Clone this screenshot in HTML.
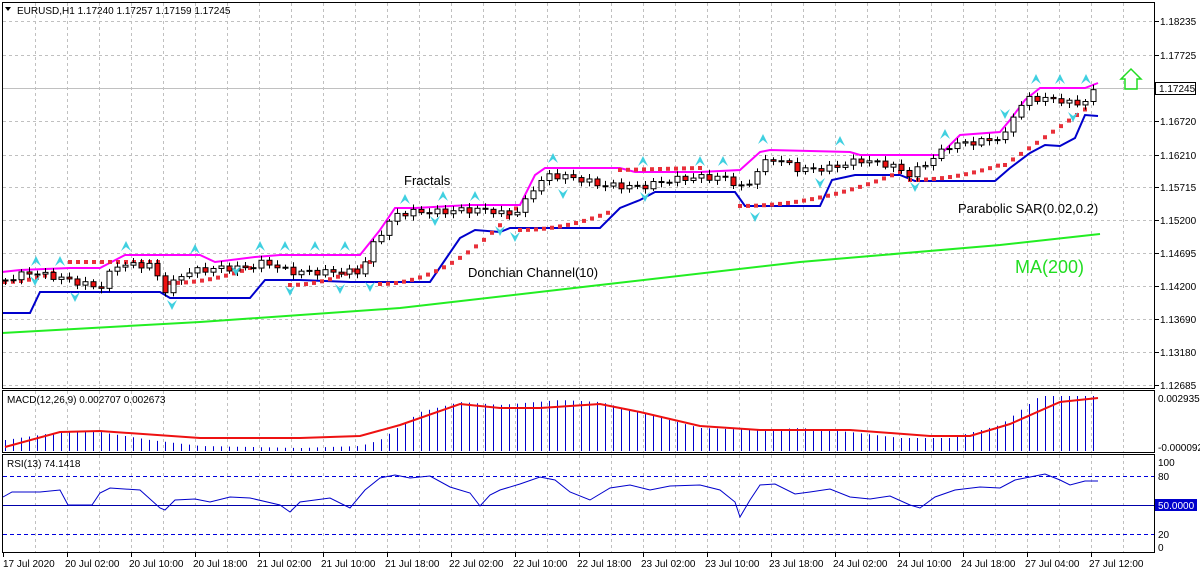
<!DOCTYPE html>
<html><head><meta charset="utf-8"><style>
html,body{margin:0;padding:0;background:#fff;width:1200px;height:575px;overflow:hidden}
svg{display:block;font-family:"Liberation Sans",sans-serif}
</style></head><body>
<svg id="s" width="1200" height="575" xmlns="http://www.w3.org/2000/svg">
<rect width="1200" height="575" fill="#fff"/>
<g id="grid"></g>
<g id="plot"></g>
<g id="frame" fill="none" stroke="#000" stroke-width="1">
<rect x="2.5" y="2.5" width="1152" height="386"/>
<rect x="2.5" y="390.5" width="1152" height="62"/>
<rect x="2.5" y="454.5" width="1152" height="98"/>
</g>
<g font-size="11" fill="#000">
<text x="17" y="14" font-size="10">EURUSD,H1  1.17240 1.17257 1.17159 1.17245</text>
<path d="M5 7 L11 7 L8 11 Z" fill="#000"/>
<text x="7" y="403" font-size="10">MACD(12,26,9) 0.002707 0.002673</text>
<text x="7" y="467" font-size="10">RSI(13) 74.1418</text>
<text x="404" y="185" font-size="13">Fractals</text>
<text x="468" y="277" font-size="13">Donchian Channel(10)</text>
<text x="958" y="213" font-size="13">Parabolic SAR(0.02,0.2)</text>
<text x="1015" y="273" font-size="18" fill="#22dd22">MA(200)</text>
</g>
<path d="M1125 89 L1125 79 L1121 79 L1131 69 L1141 79 L1137 79 L1137 89 Z" fill="none" stroke="#22dd22" stroke-width="1.5"/>
<g id="axis" font-size="10" fill="#000"></g>
</svg>
<script>
var NS="http://www.w3.org/2000/svg";
function el(p,t,a,txt){var e=document.createElementNS(NS,t);for(var k in a)e.setAttribute(k,a[k]);if(txt!=null)e.textContent=txt;p.appendChild(e);return e;}
function interp(pts,x){if(x<=pts[0][0])return pts[0][1];for(var i=1;i<pts.length;i++){if(x<=pts[i][0]){var a=pts[i-1],b=pts[i];return a[1]+(b[1]-a[1])*(x-a[0])/(b[0]-a[0]);}}return pts[pts.length-1][1];}
function poly(pts){return pts.map(function(p){return p[0]+","+p[1]}).join(" ");}
var G=document.getElementById("grid"),P=document.getElementById("plot"),A=document.getElementById("axis");
for(var x=35;x<1155;x+=32){[[3,388],[391,452],[455,552]].forEach(function(r){el(G,"line",{x1:x+.5,y1:r[0],x2:x+.5,y2:r[1],stroke:"#c0c0c0","stroke-dasharray":"3,3"});});}
var prices=[["1.18235",21],["1.17725",55],["1.16720",121],["1.16210",155],["1.15715",187],["1.15200",220],["1.14695",253],["1.14200",286],["1.13690",319],["1.13180",352],["1.12685",385]];
prices.forEach(function(p){el(G,"line",{x1:3,y1:p[1]+.5,x2:1154,y2:p[1]+.5,stroke:"#c0c0c0","stroke-dasharray":"3,3"});el(A,"line",{x1:1155,y1:p[1]+.5,x2:1159,y2:p[1]+.5,stroke:"#000"});el(A,"text",{x:1160,y:p[1]+4},p[0]);});
el(G,"line",{x1:3,y1:88.5,x2:1154,y2:88.5,stroke:"#c0c0c0"});
el(A,"rect",{x:1155.5,y:82.5,width:40,height:12,fill:"#fff",stroke:"#000"});
el(A,"text",{x:1159,y:92},"1.17245");
el(G,"line",{x1:3,y1:476.5,x2:1154,y2:476.5,stroke:"#0000dd","stroke-dasharray":"4,3"});
el(G,"line",{x1:3,y1:534.5,x2:1154,y2:534.5,stroke:"#0000dd","stroke-dasharray":"4,3"});
el(G,"line",{x1:3,y1:505.5,x2:1154,y2:505.5,stroke:"#0000aa"});
[["100",466],["80",480],["20",538],["0",551]].forEach(function(t){el(A,"text",{x:1158,y:t[1]},t[0]);});
el(A,"rect",{x:1155,y:499,width:42,height:12,fill:"#0000cc"});
el(A,"text",{x:1158,y:509,fill:"#fff"},"50.0000");
el(A,"text",{x:1158,y:402},"0.002935");
el(A,"text",{x:1158,y:451},"-0.000092");
var tl=["17 Jul 2020","20 Jul 02:00","20 Jul 10:00","20 Jul 18:00","21 Jul 02:00","21 Jul 10:00","21 Jul 18:00","22 Jul 02:00","22 Jul 10:00","22 Jul 18:00","23 Jul 02:00","23 Jul 10:00","23 Jul 18:00","24 Jul 02:00","24 Jul 10:00","24 Jul 18:00","27 Jul 04:00","27 Jul 12:00"];
tl.forEach(function(t,i){var x=3+64*i;el(A,"line",{x1:x+.5,y1:553,x2:x+.5,y2:557,stroke:"#000"});el(A,"text",{x:x+(i==0?0:-2),y:567},t);});
el(P,"polyline",{points:poly([[2,333],[200,322],[400,308],[600,285],[800,262],[1000,245],[1100,234]]),fill:"none",stroke:"#22ee22","stroke-width":2});
var up=[[2,272],[20,270],[70,268],[100,268],[125,255],[200,255],[215,262],[255,257],[280,255],[360,255],[380,230],[395,208],[415,208],[470,205],[520,205],[535,175],[545,168],[620,168],[635,172],[700,172],[740,170],[760,152],[770,150],[850,152],[860,155],[940,155],[960,135],[1000,132],[1010,120],[1025,100],[1040,88],[1085,88],[1098,83]];
var lo=[[2,313],[30,313],[40,292],[160,292],[170,298],[250,298],[265,280],[300,280],[350,282],[430,282],[445,260],[460,238],[475,230],[500,232],[510,228],[600,228],[620,208],[640,200],[655,192],[735,192],[745,206],[820,206],[832,180],[855,175],[900,175],[915,181],[995,181],[1010,168],[1030,153],[1045,145],[1060,146],[1075,138],[1085,115],[1098,116]];
el(P,"polyline",{points:poly(up),fill:"none",stroke:"#ff00ff","stroke-width":2});
el(P,"polyline",{points:poly(lo),fill:"none",stroke:"#0000cc","stroke-width":2});
function seg(x0,x1,y0,y1,acc){for(var x=x0;x<=x1;x+=8){var t=(x-x0)/Math.max(1,(x1-x0));var tt=acc?t*t:t;el(P,"rect",{x:x-2,y:y0+(y1-y0)*tt-2,width:4,height:4,fill:"#e8303a"});}}
seg(5,60,282,270,1);seg(70,160,262,262,0);seg(170,250,283,268,1);seg(290,370,285,262,1);seg(380,520,284,204,1);seg(520,610,230,212,1);seg(620,700,170,168,0);seg(740,900,206,172,1);seg(910,1000,180,165,1);seg(1005,1090,165,106,0);
var cl=[[5,280],[30,272],[60,278],[100,288],[115,265],[150,265],[165,290],[185,272],[220,268],[245,268],[265,262],[290,272],[320,272],[360,272],[375,240],[395,215],[410,212],[440,212],[460,210],[490,210],[505,215],[520,210],[535,185],[550,175],[575,178],[600,185],[640,187],[670,180],[700,177],[725,178],[745,190],[760,165],[775,158],[800,170],[830,168],[860,160],[890,165],[910,175],[930,160],[950,145],[990,140],[1005,135],[1015,110],[1030,98],[1060,100],[1075,105],[1085,100],[1098,88]];
var prev=interp(cl,0);
for(var i=0;i<137;i++){var x=5+8*i;if(x>1098)break;var c=interp(cl,x)+Math.sin(i*2.3)*3;var o=prev;prev=c;var hi=Math.min(o,c)-2-Math.abs(Math.sin(i*1.7))*3,lw=Math.max(o,c)+2+Math.abs(Math.cos(i*1.3))*3;
el(P,"line",{x1:x+.5,y1:hi,x2:x+.5,y2:lw,stroke:"#000"});var ty=Math.min(o,c),h=Math.max(1,Math.abs(o-c));
el(P,"rect",{x:x-2,y:ty,width:5,height:h,fill:c>o?"#ee1111":"#fff",stroke:"#000","stroke-width":1});}
function fr(x,y,upw){var d=upw?"M"+(x-5)+" "+(y+6)+" L"+x+" "+(y-4)+" L"+(x+5)+" "+(y+6)+" L"+x+" "+(y+2)+"Z":"M"+(x-5)+" "+(y-6)+" L"+x+" "+(y+4)+" L"+(x+5)+" "+(y-6)+" L"+x+" "+(y-2)+"Z";el(P,"path",{d:d,fill:"#40d0e0"});}
[[36,260],[60,260],[126,245],[195,248],[260,245],[285,245],[315,245],[345,245],[405,198],[443,195],[475,195],[553,157],[643,160],[700,160],[723,160],[763,138],[840,140],[945,133],[1036,78],[1060,78],[1086,78]].forEach(function(f){fr(f[0],f[1],1);});
[[35,282],[75,298],[172,306],[236,272],[290,292],[340,290],[370,288],[435,222],[500,232],[515,238],[563,195],[645,198],[755,218],[820,184],[915,188],[1005,115],[1073,118]].forEach(function(f){fr(f[0],f[1],0);});
var mh=[[5,440],[60,432],[100,432],[150,440],[200,446],[300,448],[360,446],[380,440],[420,412],[460,402],[500,405],[560,400],[600,402],[650,415],[700,428],[760,430],[800,428],[850,432],[900,438],[950,438],[1000,425],[1040,396],[1090,396]];
for(var x=5;x<=1098;x+=8){el(P,"line",{x1:x+.5,y1:interp(mh,x),x2:x+.5,y2:451,stroke:"#0000cc"});}
el(P,"polyline",{points:poly([[5,447],[60,432],[100,431],[200,438],[300,438],[360,436],[400,425],[460,404],[500,408],[540,408],[600,404],[640,412],[700,426],[760,430],[850,430],[930,436],[970,436],[1010,424],[1060,402],[1098,398]]),fill:"none",stroke:"#ee1111","stroke-width":2});
el(P,"polyline",{points:poly([[3,497],[12,492],[40,492],[60,490],[68,505],[80,505],[92,505],[100,493],[110,488],[140,490],[160,508],[165,510],[175,500],[195,499],[210,502],[230,497],[250,498],[280,505],[290,512],[300,502],[330,498],[350,508],[365,490],[380,478],[395,475],[410,478],[430,476],[450,487],[470,493],[480,506],[490,495],[500,490],[520,484],[540,477],[555,480],[570,492],[590,500],[610,488],[630,485],[650,490],[670,486],[700,485],[720,490],[735,502],[740,517],[750,500],[760,485],[775,484],[795,494],[810,492],[830,489],[850,497],[870,499],[890,496],[910,505],[920,508],[935,497],[955,490],[980,487],[1000,488],[1015,480],[1030,477],[1045,474],[1060,480],[1070,485],[1085,481],[1098,481]]),fill:"none",stroke:"#0000cc","stroke-width":1});
</script>
</body></html>
